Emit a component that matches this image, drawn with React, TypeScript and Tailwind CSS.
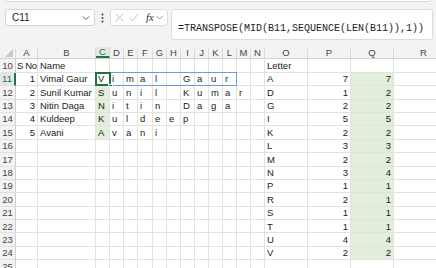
import React from "react";

const W = [22, 58, 14, 14, 14, 15, 14, 14, 14, 14, 14, 14, 14, 14, 43, 43, 43, 60];
const LET = "ABCDEFGHIJKLMNOPQR".split("");

type Row = { n: number; cells: Record<string, string> };

const names: Record<number, [string, string]> = {
  11: ["1", "Vimal Gaur"],
  12: ["2", "Sunil Kumar"],
  13: ["3", "Nitin Daga"],
  14: ["4", "Kuldeep"],
  15: ["5", "Avani"],
};

const letters: [string, string, string][] = [
  ["A", "7", "7"],
  ["D", "1", "2"],
  ["G", "2", "2"],
  ["I", "5", "5"],
  ["K", "2", "2"],
  ["L", "3", "3"],
  ["M", "2", "2"],
  ["N", "3", "4"],
  ["P", "1", "1"],
  ["R", "2", "1"],
  ["S", "1", "1"],
  ["T", "1", "1"],
  ["U", "4", "4"],
  ["V", "2", "2"],
];

function buildRows(): Row[] {
  const rows: Row[] = [];
  for (let n = 10; n <= 25; n++) {
    const cells: Record<string, string> = {};
    if (n === 10) {
      cells.A = "S No";
      cells.B = "Name";
      cells.O = "Letter";
    }
    if (names[n]) {
      cells.A = names[n][0];
      cells.B = names[n][1];
      const chars = names[n][1].split("");
      chars.forEach((ch, i) => {
        if (ch !== " ") cells[LET[2 + i]] = ch;
      });
    }
    const li = n - 11;
    if (li >= 0 && li < letters.length) {
      cells.O = letters[li][0];
      cells.P = letters[li][1];
      cells.Q = letters[li][2];
    }
    rows.push({ n, cells });
  }
  return rows;
}

const rows = buildRows();

function cellBg(col: string, n: number) {
  if (col === "C" && n >= 12 && n <= 15) return "bg-[#e2efda]";
  if (col === "Q" && n >= 11 && n <= 24) return "bg-[#e2efda]";
  return "bg-white";
}

export default function App() {
  return (
    <div
      className="w-[436px] h-[268px] overflow-hidden bg-[#f3f3f3] text-[#1b1b1b]"
      style={{ fontFamily: '"Liberation Sans", Arial, sans-serif' }}
    >
      {/* ribbon bottom edge */}
      <div className="h-[2px] mx-[5px] bg-white border-b border-x border-[#dcdcdc] rounded-b-[3px]" />
      {/* formula bar */}
      <div className="flex items-start pt-[7px] pl-[5px] pr-[3px] h-[45px]">
        <div className="w-[90px] h-[17px] bg-white border border-[#d4d4d4] rounded-[3px] flex items-center justify-between pl-[6px] pr-[4px]">
          <span className="text-[10px] leading-none">C11</span>
          <svg width="8" height="6" viewBox="0 0 8 6">
            <path d="M1 1.5 L4 4.5 L7 1.5" fill="none" stroke="#555" strokeWidth="1" />
          </svg>
        </div>
        <div className="w-[15px] h-[17px] flex items-center justify-center">
          <svg width="3" height="10" viewBox="0 0 3 10">
            <circle cx="1.5" cy="1.5" r="1" fill="#444" />
            <circle cx="1.5" cy="5" r="1" fill="#444" />
            <circle cx="1.5" cy="8.5" r="1" fill="#444" />
          </svg>
        </div>
        <div className="w-[58px] h-[17px] bg-white border border-[#dcdcdc] rounded-[3px] flex items-center pl-[4px] gap-[5px]">
          <svg width="9" height="9" viewBox="0 0 9 9">
            <path d="M0.5 0.5 L8.5 8.5 M8.5 0.5 L0.5 8.5" stroke="#c4c4c4" strokeWidth="1" />
          </svg>
          <svg width="10" height="9" viewBox="0 0 10 9">
            <path d="M0.5 4.5 L3.5 8 L9.5 0.5" fill="none" stroke="#c4c4c4" strokeWidth="1" />
          </svg>
          <span
            className="text-[11px] italic leading-none text-[#333] ml-[2px]"
            style={{ fontFamily: '"Liberation Serif", "Times New Roman", serif' }}
          >
            fx
          </span>
          <svg width="7" height="5" viewBox="0 0 7 5" className="-ml-[3px]">
            <path d="M0.5 1 L3.5 4 L6.5 1" fill="none" stroke="#888" strokeWidth="0.9" />
          </svg>
        </div>
        <div className="flex-1 ml-[3px] h-[31px] bg-white border border-[#dcdcdc] rounded-[3px] pl-[6px] pt-[4px]">
          <span
            className="text-[10px] leading-none text-[#1b1b1b]"
            style={{ fontFamily: '"Liberation Mono", "Courier New", monospace' }}
          >
            =TRANSPOSE(MID(B11,SEQUENCE(LEN(B11)),1))
          </span>
        </div>
      </div>

      {/* column header */}
      <div className="flex h-[12.4px] border-b border-[#d0d0d0] text-[9.5px] leading-none text-[#444]">
        <div className="w-[16px] shrink-0 relative border-r border-[#dcdcdc]">
          <svg width="8" height="8" viewBox="0 0 8 8" className="absolute right-[2px] bottom-[1px]">
            <path d="M8 0 L8 8 L0 8 Z" fill="#c8c8c8" />
          </svg>
        </div>
        {LET.map((l, i) => (
          <div
            key={l}
            style={{ width: W[i] }}
            className={
              "shrink-0 flex items-center justify-center border-r border-[#dcdcdc] " +
              (l === "C" ? "text-[#217346] border-b-2 border-b-[#217346] bg-[#e6e6e6]" : "")
            }
          >
            {l}
          </div>
        ))}
      </div>

      {/* rows */}
      {rows.map((r) => (
        <div key={r.n} className="flex h-[13.4px] relative text-[9.5px] leading-none">
          <div
            className={
              "w-[16px] shrink-0 flex items-center justify-center text-[9.5px] border-b border-[#e2e2e2] " +
              (r.n === 11
                ? "text-[#217346] border-r-2 border-r-[#217346] bg-[#e6e6e6]"
                : "text-[#444] border-r border-r-[#d0d0d0]")
            }
          >
            {r.n}
          </div>
          {LET.map((l, i) => {
            const v = r.cells[l] ?? "";
            const right = (l === "A" && r.n !== 10) || ((l === "P" || l === "Q") && r.n !== 10);
            const tight = l === "A" && r.n === 10;
            return (
              <div
                key={l}
                style={{ width: W[i] }}
                className={
                  "shrink-0 flex items-center border-r border-b border-[#e2e2e2] whitespace-nowrap overflow-visible " +
                  cellBg(l, r.n) +
                  (right ? " justify-end pr-[2px]" : tight ? " pl-[1px] tracking-[-0.4px]" : " pl-[2px]")
                }
              >
                {v}
              </div>
            );
          })}
          {r.n === 11 && (
            <>
              <div className="absolute left-[96px] top-[-1px] w-[141px] h-[14.4px] border border-[#6f9bd6] pointer-events-none" />
              <div className="absolute left-[95px] top-[-1px] w-[16px] h-[14.6px] border-2 border-[#217346] pointer-events-none" />
              <div className="absolute left-[108px] top-[11.5px] w-[5px] h-[5px] bg-[#217346] border border-white" />
            </>
          )}
        </div>
      ))}
    </div>
  );
}
